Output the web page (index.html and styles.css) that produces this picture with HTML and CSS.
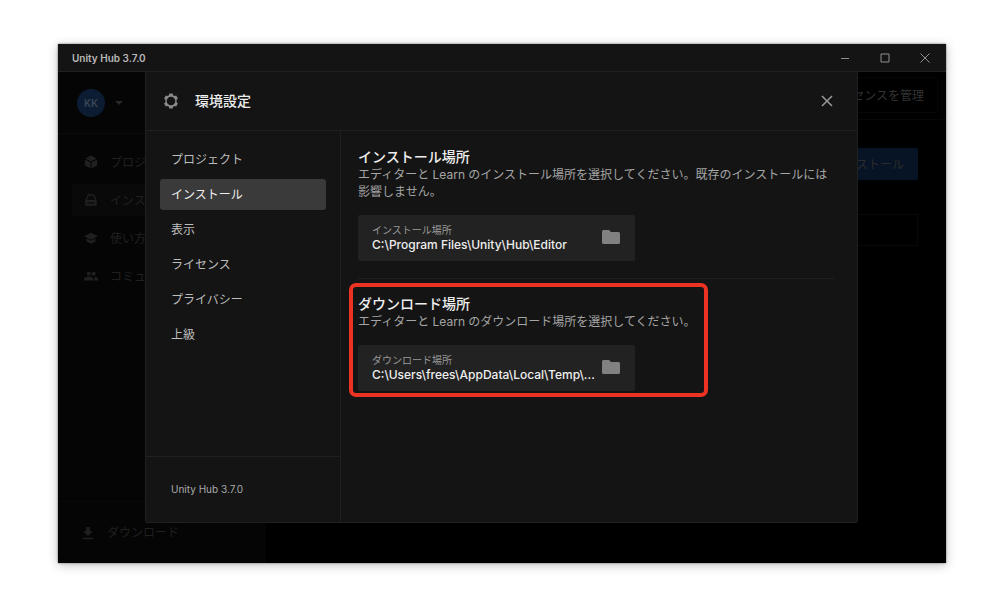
FILE: index.html
```html
<!DOCTYPE html>
<html lang="ja">
<head>
<meta charset="utf-8">
<meta name="viewport" content="width=device-width, initial-scale=1">
<title>Unity Hub 3.7.0</title>
<link rel="stylesheet" href="styles.css">
</head>
<body>
<div class="window">
  <header class="titlebar">
    <span class="titlebar-name">Unity Hub 3.7.0</span>
    <div class="window-controls">
      <button type="button" aria-label="最小化"><svg viewBox="0 0 10 10"><path d="M1 5.500h8"/></svg></button>
      <button type="button" aria-label="最大化"><svg viewBox="0 0 10 10"><path d="M1 1h8v8H1z"/></svg></button>
      <button type="button" aria-label="ウィンドウを閉じる"><svg viewBox="0 0 10 10"><path d="M.5.5l9 9M9.500.5l-9 9"/></svg></button>
    </div>
  </header>

  <div class="app">
    <aside class="sidebar">
      <button type="button" class="account"><span class="avatar">KK</span><svg viewBox="0 0 8 4"><path d="M0 0h8L4 4z"/></svg></button>
      <nav class="side-nav">
        <a href="#projects"><svg viewBox="0 0 16 16"><path d="M8 .5L14.500 4 8 7.500 1.500 4zM1 5l6.500 3.500V15.500L1 12zM15 5v7l-6.500 3.500V8.500z"/></svg>プロジェクト</a>
        <a href="#installs" class="current"><svg viewBox="0 0 16 16"><path fill-rule="evenodd" d="M4.500 1.500h7L14.500 8v6.500h-13V8zM5.500 3L3.300 8h9.400l-2.200-5zM3.500 10.500V12h9v-1.500z"/></svg>インストール</a>
        <a href="#learn"><svg viewBox="0 0 16 16"><path d="M8 2l8 4-8 4-8-4zM3 8.700l5 2.500 5-2.500V12l-5 2.600L3 12z"/></svg>使い方</a>
        <a href="#community"><svg viewBox="0 0 16 16"><circle cx="5.500" cy="5.500" r="2.300"/><circle cx="11" cy="5.500" r="2.300"/><path d="M0 13v-1.500C0 9.500 3 8.800 5.500 8.800s5 .7 5 2.700V13zM11.500 13H16v-1.500c0-1.700-2-2.500-4.300-2.700.5.900.3 1.800-.2 4.200z"/></svg>コミュニティ</a>
      </nav>
      <a href="#downloads" class="downloads"><svg viewBox="0 0 16 16"><path d="M6 1h4v5h3.500L8 11.500 2.500 6H6zM2 13.500h12V15H2z"/></svg>ダウンロード</a>
    </aside>
    <main class="main">
      <div class="main-head"><button type="button" class="license">ライセンスを管理</button></div>
      <div class="main-body">
        <button type="button" class="install">インストール</button>
        <input class="search" type="search" aria-label="検索">
      </div>
    </main>

    <section class="modal" role="dialog" aria-labelledby="modal-title">
      <header class="modal-head">
        <svg class="gear" viewBox="0 0 16 16"><path fill-rule="evenodd" d="M6.300.5h3.400l.4 1.800 1.300.8 1.800-.6 1.700 2.900L13.600 6.700v2.600l1.300 1.300-1.700 2.900-1.800-.6-1.300.8-.4 1.800H6.300l-.4-1.800-1.300-.8-1.800.6-1.700-2.900L2.400 9.300V6.700L1.100 5.400l1.700-2.900 1.800.6 1.300-.8zM8 3.700a4.300 4.300 0 100 8.600 4.300 4.300 0 000-8.600z"/></svg>
        <h1 id="modal-title">環境設定</h1>
        <button type="button" class="close" aria-label="閉じる"><svg viewBox="0 0 12 12"><path d="M1 1l10 10M11 1L1 11"/></svg></button>
      </header>
      <div class="modal-side">
        <nav class="menu">
          <a href="#p">プロジェクト</a>
          <a href="#i" class="selected" aria-current="page">インストール</a>
          <a href="#v">表示</a>
          <a href="#l">ライセンス</a>
          <a href="#r">プライバシー</a>
          <a href="#a">上級</a>
        </nav>
        <p class="version">Unity Hub 3.7.0</p>
      </div>
      <div class="settings">
        <section class="setting">
          <h2>インストール場所</h2>
          <p>エディターと Learn のインストール場所を選択してください。既存のインストールには影響しません。</p>
          <div class="path">
            <div class="path-text"><label for="install-path">インストール場所</label><input id="install-path" type="text" readonly value="C:\Program Files\Unity\Hub\Editor"></div>
            <button type="button" aria-label="インストール場所を変更"><svg viewBox="0 0 18 14"><path d="M1.500 0h5.500l2 2h7.500Q18 2 18 3.500v9Q18 14 16.500 14h-15Q0 14 0 12.500v-11Q0 0 1.500 0z"/></svg></button>
          </div>
        </section>
        <hr>
        <section class="setting marked">
          <h2>ダウンロード場所</h2>
          <p>エディターと Learn のダウンロード場所を選択してください。</p>
          <div class="path">
            <div class="path-text"><label for="download-path">ダウンロード場所</label><input id="download-path" type="text" readonly value="C:\Users\frees\AppData\Local\Temp\..."></div>
            <button type="button" aria-label="ダウンロード場所を変更"><svg viewBox="0 0 18 14"><path d="M1.500 0h5.500l2 2h7.500Q18 2 18 3.500v9Q18 14 16.500 14h-15Q0 14 0 12.500v-11Q0 0 1.500 0z"/></svg></button>
          </div>
        </section>
      </div>
    </section>
  </div>
</div>
</body>
</html>
```
FILE: styles.css
```css
* { box-sizing: border-box; }
body {
  margin: 0;
  min-height: 100vh;
  padding: 44px 54px 46px 58px;
  display: flex;
  background: #fff;
  color: #bdbdbd;
  font: 12px/17px Inter, "Noto Sans CJK JP", sans-serif;
}
h1, h2, p { margin: 0; }
h1, h2 { color: #eee; font-size: 14px; line-height: 18px; font-weight: 500; }
a { color: inherit; text-decoration: none; }
button, input { font: inherit; color: inherit; background: none; border: 0; padding: 0; margin: 0; }
svg { display: block; flex: none; fill: currentColor; }

.window {
  flex: 1;
  min-width: 0;
  display: flex;
  flex-direction: column;
  background: #000;
  box-shadow: 0 0 2px rgba(0, 0, 0, .5), 0 2px 10px rgba(0, 0, 0, .25);
}
.titlebar {
  height: 28px;
  padding: 0 16px 0 14px;
  display: flex;
  align-items: center;
  justify-content: space-between;
  background: #141414;
  border-bottom: 1px solid #202020;
}
.titlebar-name { font-size: 10px; line-height: 18px; font-weight: 600; color: #b8b8b8; }
.window-controls { display: flex; gap: 30px; }
.window-controls svg { width: 10px; height: 10px; fill: none; stroke: #8f8f8f; }

.app { flex: 1; display: flex; position: relative; }
.sidebar {
  width: 208px;
  display: flex;
  flex-direction: column;
  background: #050505;
  color: #202020;
}
.account {
  height: 62px;
  padding: 0 19px;
  display: flex;
  align-items: center;
  gap: 10px;
  border-bottom: 1px solid #0c0c0c;
}
.account svg { width: 8px; height: 4px; color: #292929; }
.avatar {
  width: 28px;
  height: 28px;
  border-radius: 50%;
  background: #0b1c33;
  color: #3a4655;
  font-size: 10px;
  font-weight: 600;
  line-height: 28px;
}
.side-nav { flex: 1; padding: 12px 14px; display: flex; flex-direction: column; gap: 6px; }
.side-nav a { height: 32px; padding: 0 12px; display: flex; align-items: center; gap: 12px; border-radius: 3px; }
.side-nav .current { background: #090909; }
.side-nav svg, .downloads svg { width: 14px; height: 14px; }
.downloads {
  height: 62px;
  padding: 0 23px;
  display: flex;
  align-items: center;
  gap: 12px;
  border-top: 1px solid #090909;
}
.main { flex: 1; color: #2b2b2b; }
.main-head { height: 48px; padding: 5px 8px; display: flex; justify-content: flex-end; border-bottom: 1px solid #070707; }
.license { height: 36px; padding: 0 13px; border: 1px solid #070707; border-radius: 2px; color: #333; }
.main-body { padding: 28px; display: flex; flex-direction: column; align-items: flex-end; gap: 34px; }
.install { height: 32px; padding: 0 14px; border-radius: 2px; background: #071426; }
.search { width: 100%; height: 32px; border: 1px solid #090909; }

.modal {
  position: absolute;
  inset: 0 88px 40px 87px;
  display: grid;
  grid-template: 59px 1fr / 195px 1fr;
  background: #141414;
  border: 1px solid #202020;
  border-top: 0;
  border-radius: 0 0 3px 3px;
}
.modal-head {
  grid-column: 1 / -1;
  padding: 0 24px 0 17px;
  display: flex;
  align-items: center;
  gap: 16px;
  border-bottom: 1px solid #202020;
}
.gear { width: 16px; height: 16px; color: #8a8a8a; }
.close { margin-left: auto; }
.close svg { width: 12px; height: 12px; fill: none; stroke: #999; stroke-width: 1.500; }
.modal-side { display: flex; flex-direction: column; border-right: 1px solid #202020; }
.menu { flex: 1; padding: 13px 14px; display: flex; flex-direction: column; gap: 4px; }
.menu a { height: 31px; padding: 0 11px; line-height: 31px; border-radius: 3px; }
.menu .selected { background: #3a3a3a; color: #eee; }
.version { padding: 24px 25px; border-top: 1px solid #202020; font-size: 10px; color: #aaa; }
.settings { min-width: 0; padding: 17px 23px 17px 17px; }
.settings hr { margin: 17px 0 16px; border: 0; border-top: 1px solid #202020; }
.setting p { color: #a5a5a5; }
.path {
  width: 277px;
  max-width: 100%;
  height: 46px;
  margin-top: 15px;
  padding: 0 15px 2px 14px;
  display: flex;
  align-items: center;
  gap: 6px;
  background: #222;
  border-radius: 2px;
}
.path-text { flex: 1; min-width: 0; display: flex; flex-direction: column; }
.path label { font-size: 10px; line-height: 14px; color: #999; }
.path input { width: 100%; height: 15px; font-weight: 500; line-height: 15px; color: #eee; }
.path button { color: #818181; }
.path svg { width: 18px; height: 14px; }
.marked { position: relative; width: fit-content; }
.marked::after {
  content: "";
  position: absolute;
  inset: -12px -12px -6px -9px;
  border: 4px solid #ec3323;
  border-radius: 7px;
  pointer-events: none;
}
```
